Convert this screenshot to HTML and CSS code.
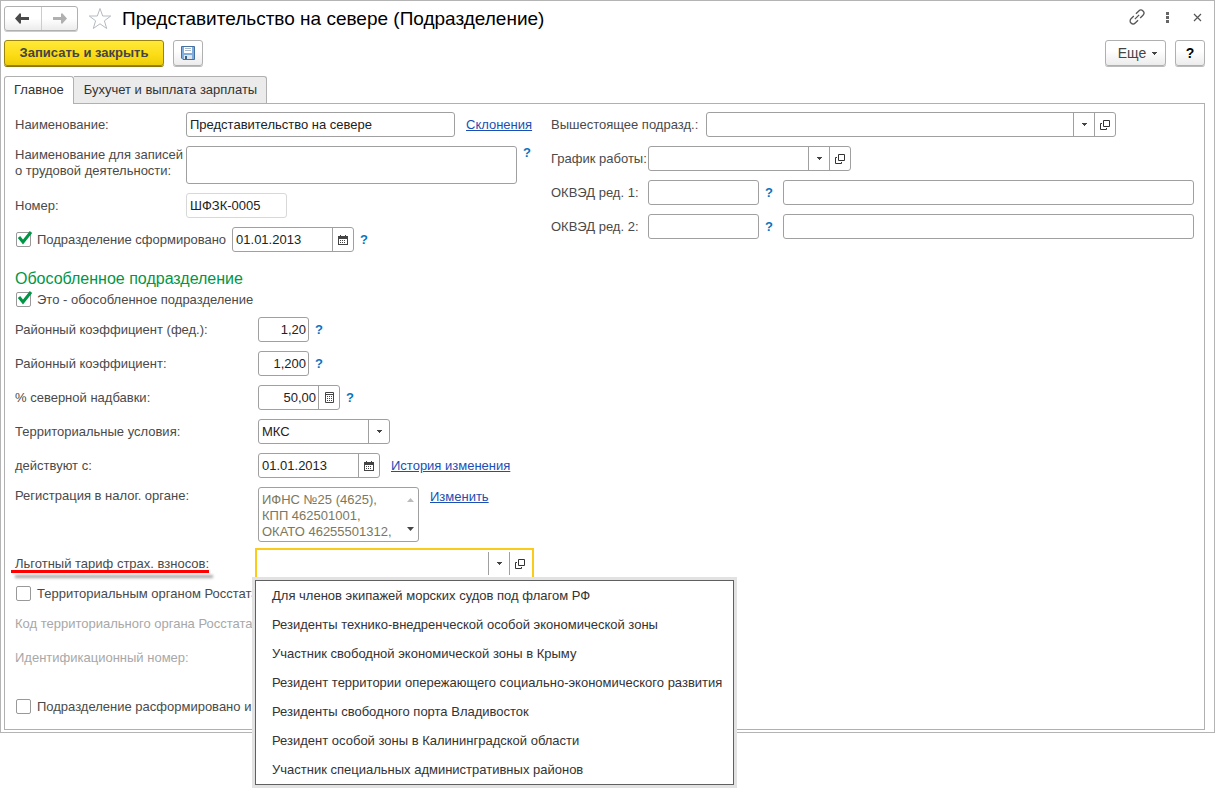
FILE: index.html
```html
<!DOCTYPE html>
<html lang="ru">
<head>
<meta charset="utf-8">
<title>Представительство на севере (Подразделение)</title>
<link rel="stylesheet" href="styles.css">
</head>
<body>
<svg class="defs" aria-hidden="true">
  <symbol id="i-open" viewBox="0 0 10 10"><path d="M3.500.5h6v6h-6zM2 3.500H.5v6h6V8" fill="none" stroke="#333"/></symbol>
  <symbol id="i-drop" viewBox="0 0 5 3"><path d="M0 0h5v1H4v1H3v1H2V2H1V1H0z" fill="#444"/></symbol>
  <symbol id="i-cal" viewBox="0 0 10 10"><path d="M2 0h1v1h4V0h1v1h2v9H0V1h2zM1 4v5h8V4z" fill="#444" fill-rule="evenodd"/><path d="M2 5h1v1H2zM4 5h1v1H4zM6 5h1v1H6zM2 7h1v1H2zM4 7h1v1H4zM6 7h1v1H6z" fill="#444"/></symbol>
  <symbol id="i-calc" viewBox="0 0 9 11"><path d="M.5.5h8v10h-8zM1 2.500h7" fill="none" stroke="#444"/><path d="M2 4h1v1H2zM4 4h1v1H4zM6 4h1v1H6zM2 6h1v1H2zM4 6h1v1H4zM6 6h1v1H6zM2 8h1v1H2zM4 8h1v1H4zM6 8h1v1H6z" fill="#444"/></symbol>
  <symbol id="i-check" viewBox="0 0 17 17"><path d="M3 7l4 5 8-10" fill="none" stroke="#009646" stroke-width="3"/></symbol>
</svg>

<main class="window">
  <header class="titlebar">
    <div class="nav">
      <button type="button" aria-label="Назад"><svg width="15" height="11" viewBox="0 0 15 11"><path d="M14 4v3H6v3L5 11 0 5.500 5 0l1 1v3z" fill="#4a4a4a"/></svg></button>
      <button type="button" aria-label="Вперед"><svg width="15" height="11" viewBox="0 0 15 11"><path d="M1 4v3h8v3l1 1 5-5.500L10 0 9 1v3z" fill="#b0b0b0"/></svg></button>
    </div>
    <button type="button" class="plain star" aria-label="В избранное"><svg width="24" height="23" viewBox="0 0 24 23"><path d="M12 1.500l2.700 7.500h8l-6.300 4.800 2.300 7.700-6.700-4.700-6.700 4.700 2.300-7.700L1.300 9h8z" fill="#fff" stroke="#b4bac2"/></svg></button>
    <h1>Представительство на севере (Подразделение)</h1>
    <div class="window-tools">
      <button type="button" class="plain" aria-label="Получить ссылку"><svg width="16" height="16" viewBox="0 0 16 16"><g fill="none" stroke="#555" stroke-width="1.300" transform="rotate(-45 8 8)"><path d="M6.500 5H2.500a3 3 0 0 0 0 6h4M9.500 5h4a3 3 0 0 1 0 6h-4M5 8h6"/></g></svg></button>
      <button type="button" class="plain" aria-label="Меню"><svg width="16" height="16" viewBox="0 0 16 16"><path d="M7 3h3v3H7zM7 7h3v3H7zM7 11h3v3H7z" fill="#666"/></svg></button>
      <button type="button" class="plain" aria-label="Закрыть"><svg width="16" height="16" viewBox="0 0 16 16"><path d="M5 5l7 7M12 5l-7 7" stroke="#555" stroke-width="1.200"/></svg></button>
    </div>
  </header>

  <div class="commands">
    <button type="button" class="btn primary">Записать и закрыть</button>
    <button type="button" class="btn square" aria-label="Записать"><svg width="14" height="14" viewBox="0 0 14 14"><path d="M.5.5h13v13H2L.5 12z" fill="#7fadde" stroke="#44709f"/><path d="M3 1h8v6H3z" fill="#fff"/><path d="M4 2.500h6M4 4.500h6" stroke="#a8b8c8"/><path d="M3 9h8v4H3z" fill="#dfe5ea"/><path d="M4 10h2v3H4z" fill="#34608f"/></svg></button>
    <button type="button" class="btn more">Еще <svg width="5" height="3"><use href="#i-drop"/></svg></button>
    <button type="button" class="btn square question" aria-label="Справка">?</button>
  </div>

  <div class="tabs" role="tablist">
    <button type="button" role="tab" aria-selected="true" class="tab active">Главное</button>
    <button type="button" role="tab" aria-selected="false" class="tab">Бухучет и выплата зарплаты</button>
  </div>

  <section class="panel" role="tabpanel">
    <div class="col-left">
      <div class="row">
        <label class="short" for="name">Наименование:</label>
        <div class="field w-name"><input id="name" type="text" value="Представительство на севере"></div>
        <a class="link" href="#">Склонения</a>
      </div>
      <div class="row top">
        <label class="short" for="labor">Наименование для записей<br>о трудовой деятельности:</label>
        <div class="field tall"><textarea id="labor"></textarea></div>
        <button type="button" class="plain help">?</button>
      </div>
      <div class="row">
        <label class="short" for="num">Номер:</label>
        <div class="field locked w-num"><input id="num" type="text" value="ШФЗК-0005" readonly></div>
      </div>
      <div class="row">
        <label class="check"><span class="box"><input type="checkbox" checked><svg><use href="#i-check"/></svg></span>Подразделение сформировано</label>
        <div class="field w-date"><input type="text" value="01.01.2013" aria-label="Дата формирования"><button type="button" aria-label="Календарь"><svg width="10" height="10"><use href="#i-cal"/></svg></button></div>
        <button type="button" class="plain help">?</button>
      </div>

      <div class="group">
        <h2>Обособленное подразделение</h2>
        <label class="check"><span class="box"><input type="checkbox" checked><svg><use href="#i-check"/></svg></span>Это - обособленное подразделение</label>
      </div>

      <div class="row">
        <label class="long" for="k1">Районный коэффициент (фед.):</label>
        <div class="field w-coef"><input id="k1" class="number" type="text" value="1,20"></div>
        <button type="button" class="plain help">?</button>
      </div>
      <div class="row">
        <label class="long" for="k2">Районный коэффициент:</label>
        <div class="field w-coef"><input id="k2" class="number" type="text" value="1,200"></div>
        <button type="button" class="plain help">?</button>
      </div>
      <div class="row">
        <label class="long" for="north">% северной надбавки:</label>
        <div class="field w-north"><input id="north" class="number" type="text" value="50,00"><button type="button" aria-label="Калькулятор"><svg width="9" height="11"><use href="#i-calc"/></svg></button></div>
        <button type="button" class="plain help">?</button>
      </div>
      <div class="row">
        <label class="long" for="terr">Территориальные условия:</label>
        <div class="field select w-terr"><select id="terr"><option>МКС</option></select><span class="arrow"><svg width="5" height="3"><use href="#i-drop"/></svg></span></div>
      </div>
      <div class="row">
        <label class="long" for="since">действуют с:</label>
        <div class="field w-date"><input id="since" type="text" value="01.01.2013"><button type="button" aria-label="Календарь"><svg width="10" height="10"><use href="#i-cal"/></svg></button></div>
        <a class="link" href="#">История изменения</a>
      </div>
      <div class="row top">
        <label class="long" for="tax">Регистрация в налог. органе:</label>
        <div class="field tax"><textarea id="tax" readonly>ИФНС №25 (4625),
КПП 462501001,
ОКАТО 46255501312,</textarea><span class="scroll"><svg width="7" height="5" viewBox="0 0 7 5"><path d="M0 5l3.500-4L7 5z" fill="#bbb"/></svg><svg width="7" height="5" viewBox="0 0 7 5"><path d="M0 0h7L3.500 4z" fill="#444"/></svg></span></div>
        <a class="link" href="#">Изменить</a>
      </div>
      <div class="row">
        <label class="long" for="tariff"><span class="marked">Льготный тариф страх. взносов:</span></label>
        <div class="combo">
          <div class="field focused"><input id="tariff" type="text" role="combobox" aria-expanded="true" aria-controls="tariffs"><button type="button" aria-label="Выбрать из списка"><svg width="5" height="3"><use href="#i-drop"/></svg></button><button type="button" aria-label="Открыть"><svg width="10" height="10"><use href="#i-open"/></svg></button></div>
          <ul class="dropdown" id="tariffs" role="listbox">
            <li role="option">Для членов экипажей морских судов под флагом РФ</li>
            <li role="option">Резиденты технико-внедренческой особой экономической зоны</li>
            <li role="option">Участник свободной экономической зоны в Крыму</li>
            <li role="option">Резидент территории опережающего социально-экономического развития</li>
            <li role="option">Резиденты свободного порта Владивосток</li>
            <li role="option">Резидент особой зоны в Калининградской области</li>
            <li role="option">Участник специальных административных районов</li>
          </ul>
        </div>
      </div>
      <label class="check"><span class="box"><input type="checkbox"></span>Территориальным органом Росстата</label>
      <div class="row disabled">Код территориального органа Росстата:</div>
      <div class="row disabled">Идентификационный номер:</div>
      <label class="check last"><span class="box"><input type="checkbox"></span>Подразделение расформировано и</label>
    </div>

    <div class="col-right">
      <div class="row">
        <label class="parent" for="parent">Вышестоящее подразд.:</label>
        <div class="field w-parent"><input id="parent" type="text"><button type="button" aria-label="Выбрать из списка"><svg width="5" height="3"><use href="#i-drop"/></svg></button><button type="button" aria-label="Открыть"><svg width="10" height="10"><use href="#i-open"/></svg></button></div>
      </div>
      <div class="row">
        <label class="code" for="sched">График работы:</label>
        <div class="field w-sched"><input id="sched" type="text"><button type="button" aria-label="Выбрать из списка"><svg width="5" height="3"><use href="#i-drop"/></svg></button><button type="button" aria-label="Открыть"><svg width="10" height="10"><use href="#i-open"/></svg></button></div>
      </div>
      <div class="row">
        <label class="code" for="okved1">ОКВЭД ред. 1:</label>
        <div class="field w-okved"><input id="okved1" type="text"></div>
        <button type="button" class="plain help">?</button>
        <div class="field grow"><input type="text" aria-label="Наименование ОКВЭД ред. 1"></div>
      </div>
      <div class="row">
        <label class="code" for="okved2">ОКВЭД ред. 2:</label>
        <div class="field w-okved"><input id="okved2" type="text"></div>
        <button type="button" class="plain help">?</button>
        <div class="field grow"><input type="text" aria-label="Наименование ОКВЭД ред. 2"></div>
      </div>
    </div>
  </section>
</main>
</body>
</html>
```
FILE: styles.css
```css
* { box-sizing: border-box; }

body {
  min-height: 100vh;
  margin: 0;
  background: #fff;
  color: #4a4a4a;
  font: 13px/16px "Liberation Sans", Arial, sans-serif;
}

button, input, select, textarea { font: inherit; color: #222; }
button { padding: 0; cursor: pointer; }
svg { display: block; flex: none; }
.defs { position: absolute; width: 0; height: 0; }

.window {
  border: 1px solid #b4b4b4;
  padding: 5px 9px 2px 3px;
}

.plain { border: 0; background: none; }

/* Title bar */
.titlebar { display: flex; align-items: center; height: 25px; }

.nav {
  display: flex;
  width: 74px;
  height: 25px;
  border: 1px solid #b0b0b0;
  border-radius: 3px;
  background: linear-gradient(#fff 50%, #ececec);
  box-shadow: 0 1px 0 #ccc;
}
.nav button {
  flex: 1;
  display: grid;
  place-items: center;
  border: 0;
  background: none;
}
.nav button + button { border-left: 1px solid #ccc; }

.star { margin: 0 10px; }

h1 {
  margin: 0;
  color: #000;
  font-size: 19px;
  font-weight: 400;
  line-height: 24px;
}

.window-tools { display: flex; gap: 14px; margin-left: auto; padding-bottom: 3px; }

/* Command bar */
.commands { display: flex; gap: 9px; margin-top: 9px; height: 27px; }

.btn {
  display: flex;
  align-items: center;
  justify-content: center;
  height: 26px;
  border: 1px solid #b0b0b0;
  border-radius: 3px;
  background: linear-gradient(#fff 40%, #ececec);
  box-shadow: 0 1px 0 #bbb;
}
.primary {
  width: 160px;
  border-color: #9a8410;
  background: linear-gradient(#ffe838, #fbdc14 60%, #ecce08);
  box-shadow: 0 1px 0 #8a7408;
  color: #444;
  font-weight: 700;
}
.square { width: 30px; }
.more { width: 61px; gap: 6px; margin-left: auto; padding-left: 4px; color: #444; font-size: 14px; }
.question { color: #000; font-size: 14px; font-weight: 700; }

/* Tabs */
.tabs { display: flex; margin-top: 9px; }
.tab {
  height: 27px;
  padding: 0 9px 0 10px;
  border: 1px solid #b0b0b0;
  border-left: 0;
  border-bottom: 0;
  border-radius: 0 3px 0 0;
  background: #ebebeb;
  color: #333;
}
.tab.active {
  position: relative;
  height: 28px;
  margin-bottom: -1px;
  padding: 0 9px 1px;
  border-left: 1px solid #b0b0b0;
  border-radius: 3px 3px 0 0;
  background: #fff;
}

.panel {
  display: flex;
  border: 1px solid #b0b0b0;
  padding: 8px 10px 14px;
}

.col-left {
  display: flex;
  flex: none;
  flex-direction: column;
  gap: 9px;
  width: 536px;
}
.col-right { display: flex; flex: 1; flex-direction: column; gap: 9px; }

.row { display: flex; align-items: center; gap: 6px; min-height: 25px; }
.row.top { align-items: flex-start; }
.row.top label { padding-top: 1px; }
.row.top .link { padding-top: 2px; }
.row.top .help { line-height: 14px; }
.row label { flex: none; }
.row .short { width: 171px; margin-right: -6px; }
.row .long { width: 243px; margin-right: -6px; }
.row .code { width: 97px; margin-right: -6px; }
.row .parent { width: 149px; }
.row.disabled { color: #a8a8a8; }

/* Fields */
.field {
  display: flex;
  flex: none;
  height: 25px;
  border: 1px solid #a0a0a0;
  border-radius: 3px;
  background: #fff;
  overflow: hidden;
}
.field input, .field textarea, .field select {
  flex: 1;
  width: 100%;
  min-width: 0;
  border: 0;
  padding: 0 3px;
  background: none;
  outline: 0;
  resize: none;
}
.field textarea { display: block; overflow: hidden; }
.field .number { padding: 0 2px; text-align: right; }
.field button, .arrow {
  display: grid;
  place-items: center;
  width: 21px;
  border: 0;
  border-left: 1px solid #a0a0a0;
  background: none;
}
.locked { border-color: #d8d8d8; }
.tall { width: 331px; height: 38px; }

.select { display: grid; }
.select select { grid-area: 1 / 1; appearance: none; }
.arrow { grid-area: 1 / 1; justify-self: end; pointer-events: none; }

.tax { width: 161px; height: 55px; }
.tax textarea { padding: 4px 3px 0; color: #7d775c; }
.scroll {
  display: flex;
  flex-direction: column;
  justify-content: space-between;
  padding: 9px 4px 9px 0;
}

.w-name { width: 269px; }
.w-num { width: 101px; }
.w-date { width: 122px; }
.w-coef { width: 51px; }
.w-north { width: 82px; }
.w-terr { width: 132px; }
.w-parent { width: 410px; }
.w-sched { width: 203px; }
.w-okved { width: 111px; }
.grow { flex: 1; }

.help { width: 12px; color: #0a74c0; font-weight: 700; text-align: left; }
.link { margin-left: 5px; color: #1a4fb4; }

/* Check boxes */
.check { display: flex; align-items: center; gap: 6px; padding-left: 1px; height: 17px; }
.box { display: grid; width: 15px; height: 15px; }
.box input {
  grid-area: 1 / 1;
  width: 15px;
  height: 15px;
  margin: 0;
  border: 1px solid #999;
  border-radius: 2px;
  appearance: none;
}
.box svg { grid-area: 1 / 1; width: 17px; height: 17px; margin-top: -2px; pointer-events: none; }
.last { margin-top: 19px; }

.group { display: grid; gap: 2px; padding-top: 8px; }
h2 {
  margin: 0;
  color: #009646;
  font-size: 16px;
  font-weight: 400;
  line-height: 20px;
}

.marked { position: relative; }
.marked::after {
  content: "";
  position: absolute;
  left: -4px;
  right: 0;
  bottom: -2px;
  height: 3px;
  background: #f00;
  box-shadow: 4px 5px 3px rgba(0, 0, 0, 0.35);
}

/* Open list */
.combo { position: relative; }
.focused {
  width: 273px;
  border-color: transparent;
  border-radius: 0;
  outline: 2px solid #fbcb1c;
  outline-offset: 1px;
}
.dropdown {
  position: absolute;
  top: 29px;
  left: -3px;
  margin: 0;
  padding: 0;
  border: 1px solid #606060;
  background: #fff;
  box-shadow: 0 0 0 3px #e2e2e2;
  color: #333;
  list-style: none;
  white-space: nowrap;
}
.dropdown li { padding: 0 11px 0 16px; line-height: 29px; }
```
